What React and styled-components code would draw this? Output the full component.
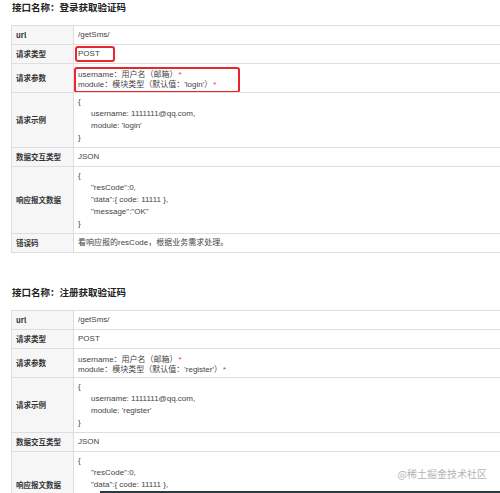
import React from "react";
import styled, { createGlobalStyle } from "styled-components";

const Global = createGlobalStyle`
  html, body { margin: 0; padding: 0; background: #fff; overflow: hidden; }
  body { font-family: "Liberation Sans", "Noto Sans CJK SC", sans-serif; color: #333; }
`;

const Page = styled.div`
  position: relative;
  width: 500px;
  height: 493px;
  overflow: hidden;
  padding-left: 11px;
  box-sizing: border-box;
`;

const Section = styled.section`
  & + & { margin-top: 32px; }
`;

const Title = styled.h3`
  margin: 0 0 11px 1px;
  font-size: 9.5px;
  line-height: 14px;
  font-weight: bold;
  color: #222;
  font-family: "Noto Sans CJK SC", "Liberation Sans", sans-serif;
`;

const Table = styled.table`
  width: 520px;
  border-collapse: collapse;
  table-layout: fixed;
`;

const Label = styled.th`
  width: 62px;
  box-sizing: border-box;
  background: #f6f6f6;
  border: 1px solid #dedede;
  padding: 3px 4px;
  text-align: left;
  vertical-align: middle;
  font-size: 7.5px;
  line-height: 12px;
  font-weight: bold;
  color: #333;
  font-family: "Noto Sans CJK SC", "Liberation Sans", sans-serif;
`;

const Value = styled.td`
  border: 1px solid #dedede;
  padding: 3px 4px;
  height: 12px;
  vertical-align: middle;
  font-size: 8px;
  line-height: 12px;
  color: #444;
  white-space: nowrap;
`;

const Mark = styled.div`
  display: block;
  width: fit-content;
  line-height: ${(p) => p.$lh};
  border: 2px solid ${(p) => (p.$on ? "#e8262b" : "transparent")};
  border-radius: 3px;
  margin: ${(p) => p.$margin};
  padding: ${(p) => p.$pad};
`;

const Line = styled.div`
  height: ${(p) => p.$h || "12px"};
  padding-left: ${(p) => (p.$indent ? "13px" : "0")};
`;

const Star = styled.span`
  color: #e53935;
  margin-left: 1px;
`;

const Watermark = styled.div`
  position: absolute;
  right: 13px;
  top: 467px;
  font-size: 10px;
  line-height: 14px;
  color: #b4b4b4;
  font-family: "Noto Sans CJK SC", "Liberation Sans", sans-serif;
`;

const BottomBar = styled.div`
  position: absolute;
  left: 100px;
  right: 0;
  bottom: 0;
  height: 2px;
  background: #2b3a40;
`;

const Code = ({ lines }) => (
  <>
    {lines.map((l, i) => (
      <Line key={i} $indent={i > 0 && i < lines.length - 1}>
        {l}
      </Line>
    ))}
  </>
);

const apis = [
  { name: "登录获取验证码", module: "login", highlight: true },
  { name: "注册获取验证码", module: "register", highlight: false },
];

const ApiTable = ({ api }) => (
  <Section>
    <Title>接口名称：{api.name}</Title>
    <Table>
      <tbody>
        <tr>
          <Label>url</Label>
          <Value>/getSms/</Value>
        </tr>
        <tr>
          <Label>请求类型</Label>
          <Value>
            <Mark $on={api.highlight} $lh="12px" $margin="-2px 0 -2px -3px" $pad="0 13px 0 1px">
              POST
            </Mark>
          </Value>
        </tr>
        <tr>
          <Label>请求参数</Label>
          <Value>
            <Mark $on={api.highlight} $lh="10px" $margin="0 0 -4px -4px" $pad="1px 22px 1px 2px">
              <Line $h="10px">
                username：用户名（邮箱）<Star>*</Star>
              </Line>
              <Line $h="10px">
                module：模块类型（默认值：'{api.module}'）<Star>*</Star>
              </Line>
            </Mark>
          </Value>
        </tr>
        <tr>
          <Label>请求示例</Label>
          <Value>
            <Code lines={["{", "username: 1111111@qq.com,", `module: '${api.module}'`, "}"]} />
          </Value>
        </tr>
        <tr>
          <Label>数据交互类型</Label>
          <Value>JSON</Value>
        </tr>
        <tr>
          <Label>响应报文数据</Label>
          <Value>
            <Code
              lines={["{", '"resCode":0,', '"data":{ code: 11111 },', '"message":"OK"', "}"]}
            />
          </Value>
        </tr>
        <tr>
          <Label>错误码</Label>
          <Value>看响应报的resCode，根据业务需求处理。</Value>
        </tr>
      </tbody>
    </Table>
  </Section>
);

export default function App() {
  return (
    <Page>
      <Global />
      {apis.map((a) => (
        <ApiTable key={a.name} api={a} />
      ))}
      <Watermark>@稀土掘金技术社区</Watermark>
      <BottomBar />
    </Page>
  );
}
